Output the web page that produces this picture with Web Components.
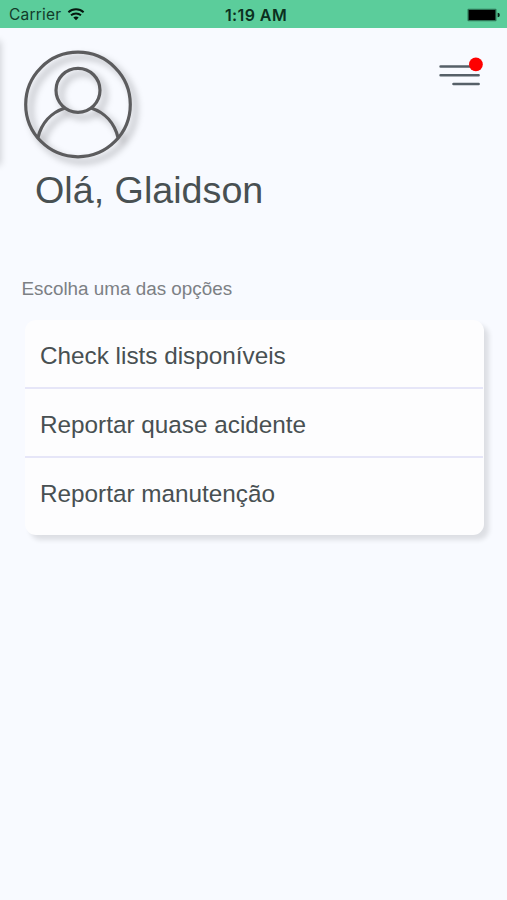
<!DOCTYPE html>
<html lang="pt-BR">
<head>
<meta charset="utf-8">
<title>Início</title>
<style>
  html, body { margin: 0; height: 100%; background: #f8faff; }
  body { font-family: "Liberation Sans", Arial, sans-serif; color: #485052; overflow: hidden; }
</style>
</head>
<body>
<app-screen>
  <status-bar slot="status"><span>Carrier</span><span slot="time">1:19 AM</span></status-bar>
  <user-avatar slot="avatar"></user-avatar>
  <menu-button slot="menu"></menu-button>
  <span slot="greeting">Olá, Glaidson</span>
  <option-list>
    <span slot="label">Escolha uma das opções</span>
    <option-row>Check lists disponíveis</option-row>
    <option-row>Reportar quase acidente</option-row>
    <option-row>Reportar manutenção</option-row>
  </option-list>
</app-screen>
<script>
const define = (name, html) => customElements.define(name, class extends HTMLElement {
  constructor() {
    super();
    this.attachShadow({ mode: 'open' }).innerHTML = html;
  }
});

define('status-bar', `
  <style>
    :host { display: grid; grid-template-columns: 1fr auto 1fr; align-items: center; height: 28px; box-sizing: border-box; padding: 2px 7px 0 9px; background: #5bcd9b; color: #123b2a; font: 400 15.5px/20px Inter, sans-serif; }
    .carrier { display: flex; align-items: center; gap: 6px; letter-spacing: .2px; }
    .time { font-weight: 600; font-size: 16px; color: #0b3020; letter-spacing: .4px; padding-left: 3px; }
    .battery { justify-self: end; }
    svg { display: block; }
    .wifi { margin-top: -2px; }
  </style>
  <div class="carrier"><slot></slot>
    <svg class="wifi" width="18" height="14" viewBox="0 0 18 14" fill="none" stroke="#06160f" stroke-width="1.9">
      <path d="M1.4 5.2C5.5 1.2 12.5 1.2 16.6 5.2M4 8.3c2.8-2.5 7.2-2.5 10 0"/>
      <path d="M9 13.2 6.3 10.6c1.6-1.5 3.8-1.5 5.4 0z" fill="#06160f" stroke="none"/>
    </svg>
  </div>
  <div class="time"><slot name="time"></slot></div>
  <svg class="battery" width="33" height="14" viewBox="0 0 33 14">
    <rect x=".5" y=".7" width="29" height="12.6" rx="1" fill="#2e7556"/>
    <rect x="1.7" y="2" width="26.6" height="10" fill="#000"/>
    <path d="M30.6 4.7q2.2 0 2.2 2.3t-2.2 2.3z" fill="#082519"/>
  </svg>`);

define('user-avatar', `
  <style>
    :host { display: block; width: 108px; height: 108px; }
    svg { display: block; overflow: visible; filter: drop-shadow(5px 5px 3.5px rgba(0,0,0,.34)); }
  </style>
  <svg width="108" height="108" viewBox="0 0 108 108" fill="none" stroke="#5c5c5e" stroke-width="3.2">
    <circle cx="54" cy="53.5" r="52.3"/>
    <circle cx="54" cy="39.3" r="22"/>
    <path d="M14 86.5C17.5 72.5 27 61.5 41 57M67 57C81 61.5 90.5 72.5 94 86.5"/>
  </svg>`);

define('menu-button', `
  <style>
    :host { display: block; }
    svg { display: block; }
  </style>
  <svg width="46" height="32" viewBox="0 0 46 32">
    <path d="M2.6 10.5h38M2.6 19.2h38M15.5 28h25.1" stroke="#566068" stroke-width="2.6" stroke-linecap="round"/>
    <circle cx="37.9" cy="8.4" r="6.9" fill="#fe0000"/>
  </svg>`);

define('app-screen', `
  <style>
    :host { display: block; height: 900px; }
    header { position: relative; display: flex; justify-content: space-between; padding: 23px 23px 0 24px; }
    header::before { content: ""; position: absolute; left: -13px; top: 11px; width: 12px; height: 124px; box-shadow: 2px 2px 7px rgba(0,0,0,.17); }
    .menu { padding-top: 5px; }
    h1 { margin: 9px 0 0 35px; font-weight: 400; font-size: 37.7px; line-height: 44px; white-space: nowrap; }
    main { padding: 66px 23px 0 25px; }
  </style>
  <slot name="status"></slot>
  <header><slot name="avatar"></slot><div class="menu"><slot name="menu"></slot></div></header>
  <h1><slot name="greeting"></slot></h1>
  <main><slot></slot></main>`);

define('option-list', `
  <style>
    :host { display: block; }
    .label { margin-left: -3.5px; font-size: 18.85px; line-height: 22px; color: #7c8084; }
    .card { margin-top: 20px; height: 215px; box-sizing: border-box; border-radius: 11px; background: #fdfdfe; box-shadow: 5px 5px 5px rgba(0,0,0,.11); }
  </style>
  <div class="label"><slot name="label"></slot></div>
  <div class="card"><slot></slot></div>`);

define('option-row', `
  <style>
    :host { display: flex; align-items: center; height: 69px; box-sizing: border-box; margin-right: 1px; padding: 4px 15px 0; border-bottom: 2px solid #e6e6f8; font-size: 24.3px; line-height: 30px; white-space: nowrap; }
    :host(:last-of-type) { border-bottom-color: transparent; }
  </style>
  <slot></slot>`);
</script>
</body>
</html>
